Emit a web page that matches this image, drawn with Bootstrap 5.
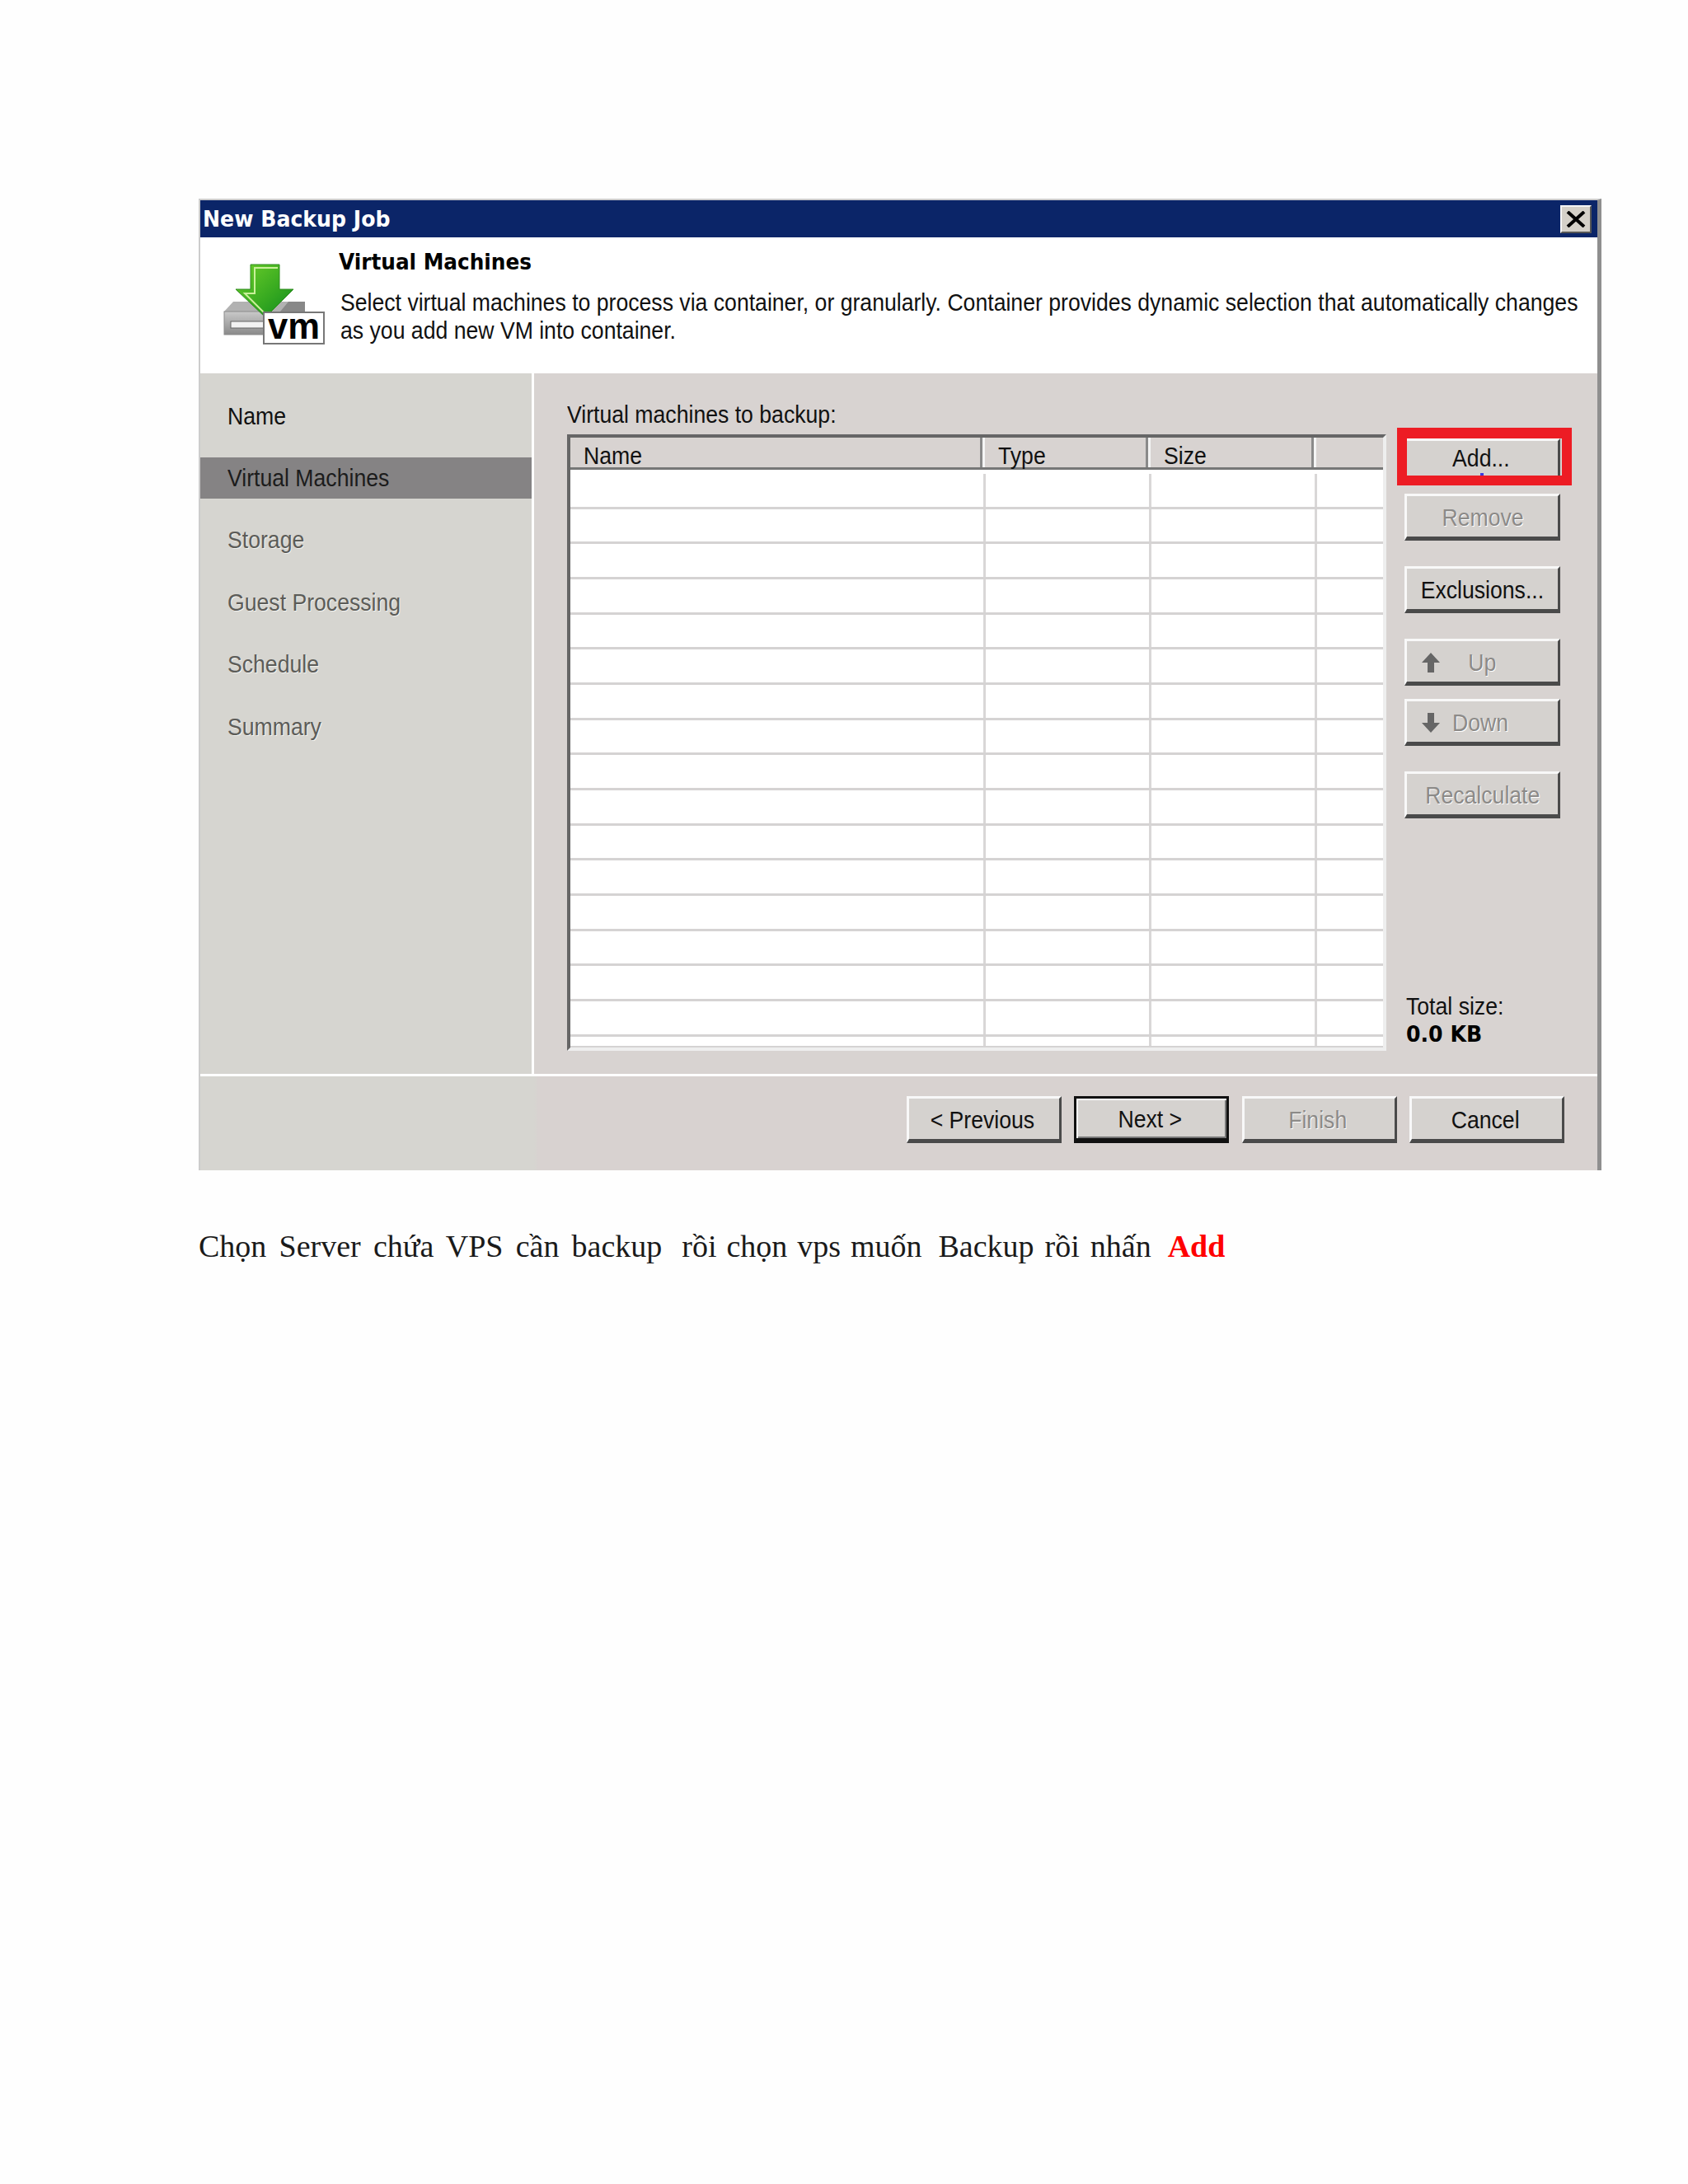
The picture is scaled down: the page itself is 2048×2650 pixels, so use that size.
<!DOCTYPE html>
<html lang="vi">
<head>
<meta charset="utf-8">
<title>New Backup Job</title>
<link rel="stylesheet" href="https://cdn.jsdelivr.net/npm/bootstrap@5.3.0/dist/css/bootstrap.min.css">
<style>
html,body{background:#fefefe;margin:0}
.pagewrap{padding:241px 0 0 241px;width:2048px;height:2650px}
.dlg{width:1702px;border:2px solid #ccc;border-right:5px solid #8f8f8f;border-bottom:0;background:#fff;font-family:"Liberation Sans",Arial,sans-serif;color:#111}
.tbar{height:45px;background:#0b2568;color:#fff;padding:0 7px 0 3px;font:700 27px/45px "DejaVu Sans",sans-serif}
.closex{width:38px;height:34px;background:#d4d0c8;border:2px solid;border-color:#f4f4f4 #555 #555 #f4f4f4}
.dhead{height:165px;background:#fff}
.dhead svg{width:168px;height:165px;flex:none}
.dtext{padding-top:15px}
.dtitle{font:700 27px/30px "DejaVu Sans",sans-serif;color:#000;margin-bottom:17px}
.dline{font-size:29px;line-height:34px;white-space:nowrap;padding-left:2px}
.sq{display:inline-block;transform-origin:0 50%;white-space:nowrap}
.sqc{display:inline-block;transform-origin:50% 50%;white-space:nowrap}
.s-title{transform:scaleX(.933)}
.s-head{transform:scaleX(.917)}
.s-desc{transform:scaleX(.918)}
.s-ui{transform:scaleX(.918)}
.dmid{height:850px}
.sidep{width:405px;flex:none;background:#d6d5d0;border-right:3px solid #fff;padding-top:14px}
.stepi{height:75.4px;font-size:29px;color:#5c5c58;text-shadow:1px 1px 0 #f2f2ee}
.stepi.first{color:#111;text-shadow:none}
.stepb{padding-left:33px;line-height:30px}
.stepi.sel{color:#1c1c1c;text-shadow:none}
.sel .stepb{background:#858384;height:50px;line-height:50px;width:402px;padding-left:33px}
.mainp{background:#d8d3d1;padding-left:40px;padding-top:35px}
.lbl{font-size:29px;line-height:30px;height:39px}
.grid{width:994px;height:748px;border:4px solid;border-color:#666 #eee #eee #666;background:#fff;overflow:hidden}
.ghead{height:39px;background:#d8d3d1;border-bottom:3px solid #777;font-size:29px;line-height:44px}
.gh1,.gc1{width:500px}.gh2,.gc2,.gh3,.gc3{width:201px}
.gc1{width:504px}
.gh1,.gh2,.gh3{border-right:3px solid #8a8a8a;box-shadow:3px 0 0 #f4f4f4;padding-left:16px}
.gh2,.gh3{padding-left:19px}
#rows{padding-top:5px}
.grow{height:42.67px;border-bottom:3px solid #d5d3d3}
.gc1,.gc2,.gc3{border-right:3px solid #d9d7d7;height:100%}
.grow.tail{height:14px}
.sidebtns{width:189px;margin-left:22px;padding-top:44px;padding-bottom:32px}
.btn.winbtn{display:block;width:189px;height:57px;padding:3px 0 0;background:#d5d2cf;border-radius:0;border-width:3px 3px 5px 3px;border-style:solid;border-color:#f8f8f8 #4a4a4a #4a4a4a #f8f8f8;color:#111;font:29px/1 "Liberation Sans",sans-serif;opacity:1}
.btn.winbtn:disabled{color:#8c8a88;text-shadow:1px 1px 0 #fff;background:#d5d2cf;border-color:#f8f8f8 #4a4a4a #4a4a4a #f8f8f8;opacity:1}
.btn.winbtn.addbtn{padding:0 3px 6px 0}
.mt10{margin-top:10px}.mt31{margin-top:31px}.mt16{margin-top:16px}
.addwrap{position:relative}
.redbox{position:absolute;left:-9px;top:-13px;width:212px;height:70px;border:solid #ed1c24;border-width:13px 12px 12px 12px;pointer-events:none}
.bluedot{position:absolute;left:89px;bottom:0;width:4px;height:3px;background:#3a3ae0}
.totals{font-size:29px;line-height:33px;margin-top:auto;padding-left:2px}
.totals b{font-family:"DejaVu Sans",sans-serif;font-size:27px;color:#000}
.sepfoot{height:117px;border-top:3px solid #fff;background:linear-gradient(90deg,#d6d5d0 405px,#d8d2d0 410px);padding:24px 40px 0 0;gap:15.5px}
.sepfoot .btn.winbtn{width:188px;padding:3px 3px 0 0}
.btn.winbtn.defbtn{border:3px solid #111;border-bottom-width:6px;box-shadow:inset 2px 2px 0 #fff,inset -2px -2px 0 #777}
.arrowsvg{width:24px;height:26px;flex:none}
.btn.winbtn.upbtn{padding:3px 0 0 17px}
.downlbl{margin-left:11px}
.caption{font:38px/48px "Liberation Serif","Times New Roman",serif;color:#1a1a1a;margin:68px 0 0 0;white-space:nowrap}
.seg1{word-spacing:5.7px}
.seg2{word-spacing:2.4px;margin-left:24px}
.seg3{word-spacing:3.5px;margin-left:20px}
.seg4{margin-left:20px;color:#f00}
</style>
</head>
<body>
<div class="pagewrap">
 <div class="dlg">
  <div class="tbar d-flex justify-content-between align-items-center">
   <span class="sq s-title">New Backup Job</span>
   <div class="closex d-flex align-items-center justify-content-center">
    <svg width="26" height="20" viewBox="0 0 26 20"><path d="M3 1 L23 19 M23 1 L3 19" stroke="#000" stroke-width="4" fill="none"/></svg>
   </div>
  </div>
  <div class="dhead d-flex">
   <svg viewBox="243 288 168 165" aria-hidden="true">
    <defs>
     <linearGradient id="ga" x1="0" y1="0" x2="1" y2="1"><stop offset="0" stop-color="#6fd02a"/><stop offset=".6" stop-color="#35a820"/><stop offset="1" stop-color="#0f8a20"/></linearGradient>
     <linearGradient id="gs" x1="0" y1="0" x2="0" y2="1"><stop offset="0" stop-color="#c9c9c9"/><stop offset="1" stop-color="#8a8a8a"/></linearGradient>
    </defs>
    <path d="M272 378 L283 366 H370 V378 Z" fill="#b2b2b2"/>
    <path d="M350 366 H370 V378 H340Z" fill="#888"/>
    <rect x="272" y="378" width="50" height="28" fill="url(#gs)" stroke="#8b8b8b"/>
    <rect x="280" y="390" width="42" height="8" fill="#f2f2f2" stroke="#666" stroke-width="1"/>
    <path d="M304 321 H339 V351 H356 L322 385 L286 351 H304 Z" fill="url(#ga)" stroke="#2e8b1f" stroke-width="1"/>
    <path d="M337 325 H309 V356 H297 L321 380" stroke="#c9f09a" stroke-width="2" fill="none"/>
    <rect x="320" y="379" width="73" height="38" fill="#fff" stroke="#777" stroke-width="2"/>
    <text x="325" y="411" font-family="Liberation Sans" font-weight="700" font-size="44" textLength="63" lengthAdjust="spacingAndGlyphs" fill="#000">vm</text>
   </svg>
   <div class="dtext">
    <div class="dtitle"><span class="sq s-head">Virtual Machines</span></div>
    <div class="dline"><span class="sq s-desc">Select virtual machines to process via container, or granularly. Container provides dynamic selection that automatically changes</span></div>
    <div class="dline"><span class="sq s-desc">as you add new VM into container.</span></div>
   </div>
  </div>
  <div class="dmid d-flex">
   <div class="sidep">
    <div class="stepi first d-flex align-items-center"><div class="stepb"><span class="sq s-ui">Name</span></div></div>
    <div class="stepi sel d-flex align-items-center"><div class="stepb"><span class="sq s-ui">Virtual Machines</span></div></div>
    <div class="stepi d-flex align-items-center"><div class="stepb"><span class="sq s-ui">Storage</span></div></div>
    <div class="stepi d-flex align-items-center"><div class="stepb"><span class="sq s-ui">Guest Processing</span></div></div>
    <div class="stepi d-flex align-items-center"><div class="stepb"><span class="sq s-ui">Schedule</span></div></div>
    <div class="stepi d-flex align-items-center"><div class="stepb"><span class="sq s-ui">Summary</span></div></div>
   </div>
   <div class="mainp flex-grow-1 d-flex">
    <div>
     <div class="lbl"><span class="sq s-ui">Virtual machines to backup:</span></div>
     <div class="grid">
      <div class="ghead d-flex">
       <div class="gh1"><span class="sq s-ui">Name</span></div>
       <div class="gh2"><span class="sq s-ui">Type</span></div>
       <div class="gh3"><span class="sq s-ui">Size</span></div>
      </div>
      <div id="rows"></div>
     </div>
    </div>
    <div class="sidebtns d-flex flex-column">
     <div class="addwrap">
      <button class="btn winbtn addbtn" type="button"><span class="sqc s-ui">Add...</span></button>
      <div class="redbox"><span class="bluedot"></span></div>
     </div>
     <button class="btn winbtn mt10" type="button" disabled><span class="sqc s-ui">Remove</span></button>
     <button class="btn winbtn mt31" type="button"><span class="sqc s-ui">Exclusions...</span></button>
     <button class="btn winbtn mt31 upbtn d-flex align-items-center" type="button" disabled>
      <svg class="arrowsvg" viewBox="0 0 24 26"><path d="M12 1 L23 13 H16 V25 H8 V13 H1 Z" fill="#666"/></svg>
      <span class="sqc s-ui ms-4 ps-2">Up</span>
     </button>
     <button class="btn winbtn mt16 upbtn d-flex align-items-center" type="button" disabled>
      <svg class="arrowsvg" viewBox="0 0 24 26"><path d="M8 1 H16 V13 H23 L12 25 L1 13 H8 Z" fill="#666"/></svg>
      <span class="sqc s-ui downlbl">Down</span>
     </button>
     <button class="btn winbtn mt31" type="button" disabled><span class="sqc s-ui">Recalculate</span></button>
     <div class="totals">
      <div><span class="sq s-ui">Total size:</span></div>
      <div><b class="sq s-title">0.0 KB</b></div>
     </div>
    </div>
   </div>
  </div>
  <div class="sepfoot d-flex justify-content-end">
   <button class="btn winbtn" type="button"><span class="sqc s-ui">&lt; Previous</span></button>
   <button class="btn winbtn defbtn" type="button"><span class="sqc s-ui">Next &gt;</span></button>
   <button class="btn winbtn" type="button" disabled><span class="sqc s-ui">Finish</span></button>
   <button class="btn winbtn" type="button"><span class="sqc s-ui">Cancel</span></button>
  </div>
 </div>
 <div class="caption d-flex">
  <span class="seg1">Chọn Server chứa VPS cần backup</span>
  <span class="seg2">rồi chọn vps muốn</span>
  <span class="seg3">Backup rồi nhấn</span>
  <b class="seg4">Add</b>
 </div>
</div>
<script>
var r=document.getElementById('rows'),h='';
for(var i=0;i<17;i++){h+='<div class="grow d-flex'+(i==16?' tail':'')+'"><div class="gc1"></div><div class="gc2"></div><div class="gc3"></div></div>';}
r.innerHTML=h;
</script>
<script src="https://cdn.jsdelivr.net/npm/bootstrap@5.3.0/dist/js/bootstrap.bundle.min.js"></script>
</body>
</html>
